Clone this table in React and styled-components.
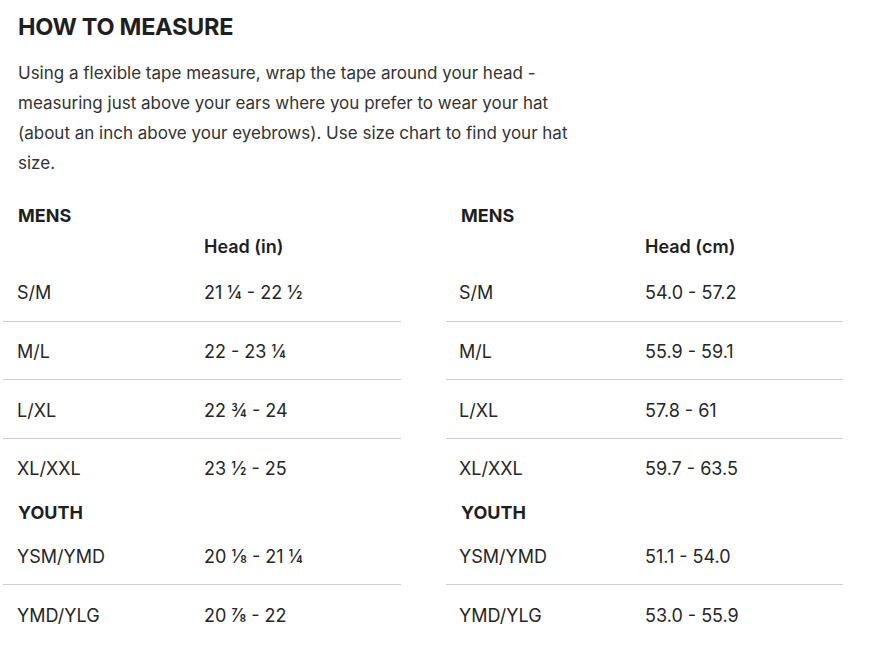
import React from "react";
import styled, { createGlobalStyle } from "styled-components";

const GlobalStyle = createGlobalStyle`
  body {
    margin: 0;
    background: #fff;
    font-family: Inter, "Liberation Sans", Arial, sans-serif;
    color: #222;
  }
`;

const Page = styled.div`
  width: 877px;
  padding: 12px 0 0 0;
  box-sizing: border-box;
`;

const Title = styled.h2`
  margin: 0 0 0 18px;
  font-size: 23.5px;
  font-weight: 700;
  line-height: 30px;
  color: #1f1f1f;
  letter-spacing: -0.3px;
`;

const Intro = styled.p`
  margin: 16px 0 0 18px;
  width: 570px;
  font-size: 17px;
  line-height: 30px;
  color: #333;
`;

const Tables = styled.div`
  display: grid;
  grid-template-columns: 398px 397px;
  column-gap: 45px;
  padding: 22px 0 0 3px;
`;

const Table = styled.div`
  display: flex;
  flex-direction: column;
`;

const Section = styled.div`
  height: ${(p) => p.$h}px;
  display: flex;
  align-items: center;
  padding-left: ${(p) => p.$indent}px;
  font-size: 18px;
  font-weight: 700;
  color: #1f1f1f;
`;

const HeadRow = styled.div`
  height: 33px;
  display: grid;
  grid-template-columns: ${(p) => p.$col}px 1fr;
  align-items: center;
  font-size: 18px;
  font-weight: 600;
  color: #1f1f1f;
`;

const Row = styled.div`
  box-sizing: border-box;
  height: 58.67px;
  padding-top: 2px;
  display: grid;
  grid-template-columns: ${(p) => p.$col}px 1fr;
  align-items: center;
  font-size: 18px;
  color: #262626;
  border-bottom: 1px solid ${(p) => (p.$line ? "#cfcfcf" : "transparent")};
`;

const Cell = styled.span`
  padding-left: ${(p) => p.$pad || 0}px;
`;

const mensIn = [
  ["S/M", "21 ¼ - 22 ½"],
  ["M/L", "22 - 23 ¼"],
  ["L/XL", "22 ¾ - 24"],
  ["XL/XXL", "23 ½ - 25"],
];
const youthIn = [
  ["YSM/YMD", "20 ⅛ - 21 ¼"],
  ["YMD/YLG", "20 ⅞ - 22"],
];
const mensCm = [
  ["S/M", "54.0 - 57.2"],
  ["M/L", "55.9 - 59.1"],
  ["L/XL", "57.8 - 61"],
  ["XL/XXL", "59.7 - 63.5"],
];
const youthCm = [
  ["YSM/YMD", "51.1 - 54.0"],
  ["YMD/YLG", "53.0 - 55.9"],
];

const SizeTable = ({ unit, mens, youth, pad, col, indent }) => (
  <Table>
    <Section $indent={indent} $h={30}>MENS</Section>
    <HeadRow $col={col}>
      <span />
      <span>Head ({unit})</span>
    </HeadRow>
    {mens.map(([size, val], i) => (
      <Row key={size} $col={col} $line={i < mens.length - 1}>
        <Cell $pad={pad}>{size}</Cell>
        <span>{val}</span>
      </Row>
    ))}
    <Section $indent={indent} $h={29}>YOUTH</Section>
    {youth.map(([size, val], i) => (
      <Row key={size} $col={col} $line={i < youth.length - 1}>
        <Cell $pad={pad}>{size}</Cell>
        <span>{val}</span>
      </Row>
    ))}
  </Table>
);

export default function App() {
  return (
    <>
      <GlobalStyle />
      <Page>
        <Title>HOW TO MEASURE</Title>
        <Intro>
          Using a flexible tape measure, wrap the tape around your head -
          measuring just above your ears where you prefer to wear your hat
          (about an inch above your eyebrows). Use size chart to find your hat
          size.
        </Intro>
        <Tables>
          <SizeTable unit="in" mens={mensIn} youth={youthIn} pad={14} col={201} indent={15} />
          <SizeTable unit="cm" mens={mensCm} youth={youthCm} pad={13} col={199} indent={15} />
        </Tables>
      </Page>
    </>
  );
}
